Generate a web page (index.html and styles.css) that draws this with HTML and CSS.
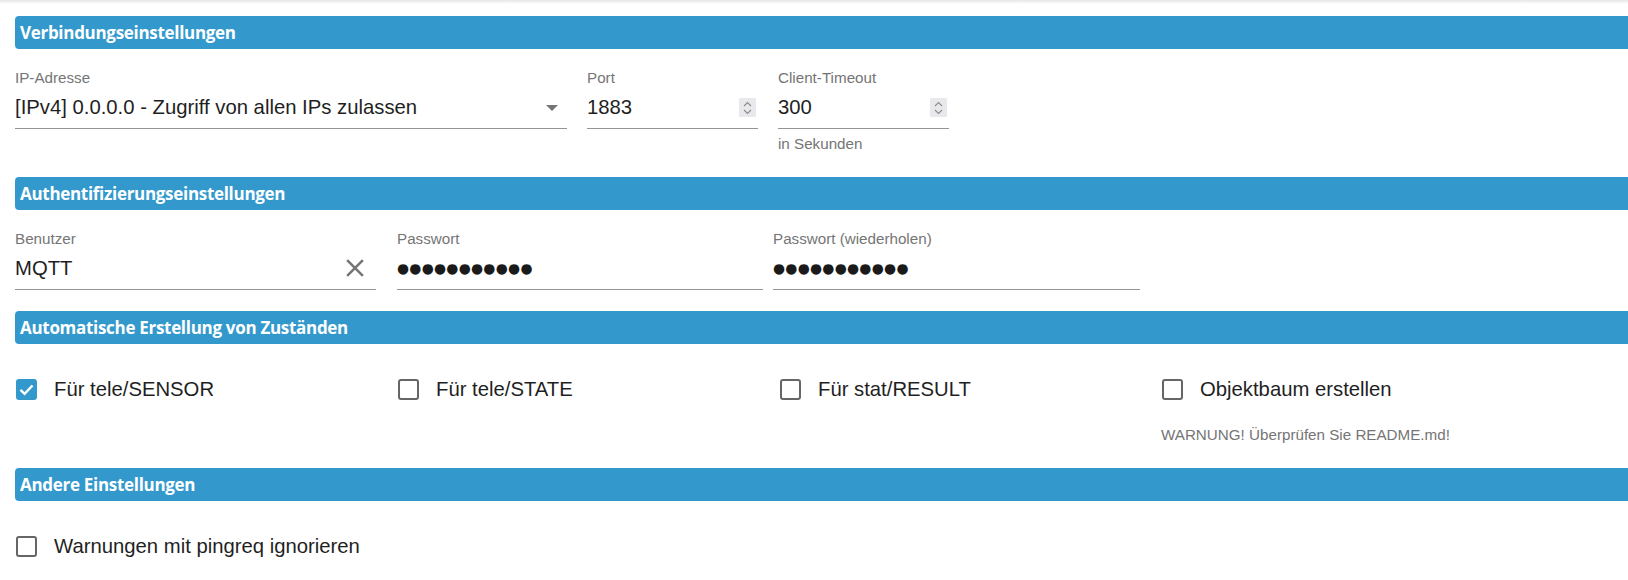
FILE: index.html
```html
<!DOCTYPE html>
<html lang="de">
<head>
<meta charset="utf-8">
<title>MQTT Einstellungen</title>
<link rel="stylesheet" href="styles.css">
</head>
<body>
<div class="topshade"></div>
<div class="page">
  <section class="sec sec1">
    <div class="hdr">Verbindungseinstellungen</div>
    <div class="row">
      <div class="field f-ip">
        <span class="lbl">IP-Adresse</span>
        <div class="ctl">
          <span class="val">[IPv4] 0.0.0.0 - Zugriff von allen IPs zulassen</span>
          <svg class="arrow" width="12" height="6" viewBox="0 0 12 6"><path d="M0 0 L12 0 L6 6 Z" fill="#757575"/></svg>
        </div>
      </div>
      <div class="field f-port">
        <span class="lbl">Port</span>
        <div class="ctl">
          <span class="val">1883</span>
          <span class="spin"><svg width="9" height="14" viewBox="0 0 9 14"><path d="M1 5 L4.5 1.5 L8 5 M1 9 L4.5 12.5 L8 9" fill="none" stroke="#8a8a8a" stroke-width="1.1"/></svg></span>
        </div>
      </div>
      <div class="field f-timeout">
        <span class="lbl">Client-Timeout</span>
        <div class="ctl">
          <span class="val">300</span>
          <span class="spin"><svg width="9" height="14" viewBox="0 0 9 14"><path d="M1 5 L4.5 1.5 L8 5 M1 9 L4.5 12.5 L8 9" fill="none" stroke="#8a8a8a" stroke-width="1.1"/></svg></span>
        </div>
        <div class="help">in Sekunden</div>
      </div>
    </div>
  </section>

  <section class="sec sec2">
    <div class="hdr">Authentifizierungseinstellungen</div>
    <div class="row">
      <div class="field f-user">
        <span class="lbl">Benutzer</span>
        <div class="ctl">
          <span class="val">MQTT</span>
          <svg class="clear" width="30" height="30" viewBox="0 0 24 24"><path d="M19 6.41L17.59 5 12 10.59 6.41 5 5 6.41 10.59 12 5 17.59 6.41 19 12 13.41 17.59 19 19 17.59 13.41 12z" fill="#757575"/></svg>
        </div>
      </div>
      <div class="field f-pw">
        <span class="lbl">Passwort</span>
        <div class="ctl">
          <span class="val dots">●●●●●●●●●●●</span>
        </div>
      </div>
      <div class="field f-pw2">
        <span class="lbl">Passwort (wiederholen)</span>
        <div class="ctl">
          <span class="val dots">●●●●●●●●●●●</span>
        </div>
      </div>
    </div>
  </section>

  <section class="sec sec3">
    <div class="hdr">Automatische Erstellung von Zuständen</div>
    <div class="grid">
      <div class="cell">
        <label class="cb">
          <span class="box checked"><svg width="21" height="21" viewBox="0 0 21 21"><path d="M4.5 10.8 L8.6 14.8 L16.5 6.5" fill="none" stroke="#fff" stroke-width="2.4"/></svg></span>
          <span class="cbtext">Für tele/SENSOR</span>
        </label>
      </div>
      <div class="cell">
        <label class="cb"><span class="box"></span><span class="cbtext">Für tele/STATE</span></label>
      </div>
      <div class="cell">
        <label class="cb"><span class="box"></span><span class="cbtext">Für stat/RESULT</span></label>
      </div>
      <div class="cell">
        <label class="cb"><span class="box"></span><span class="cbtext">Objektbaum erstellen</span></label>
        <div class="warn">WARNUNG! Überprüfen Sie README.md!</div>
      </div>
    </div>
  </section>

  <section class="sec sec4">
    <div class="hdr">Andere Einstellungen</div>
    <div class="grid">
      <div class="cell">
        <label class="cb"><span class="box"></span><span class="cbtext">Warnungen mit pingreq ignorieren</span></label>
      </div>
    </div>
  </section>
</div>
</body>
</html>
```

FILE: styles.css
```css
html, body {
  margin: 0;
  padding: 0;
  background: #ffffff;
}
body {
  font-family: "Liberation Sans", Arial, sans-serif;
  color: #212121;
  overflow: hidden;
}
.topshade {
  height: 4px;
  background: linear-gradient(#e6e6e6, #ffffff);
}
.page {
  padding-left: 15px;
}
.hdr {
  height: 33px;
  background: #3399cc;
  border-radius: 4px 0 0 4px;
  color: #ffffff;
  font-family: "Open Sans", "DejaVu Sans", sans-serif;
  font-weight: 700;
  font-size: 17px;
  letter-spacing: -0.3px;
  line-height: 33px;
  padding-left: 5px;
  white-space: nowrap;
}
.sec1 .hdr { margin-top: 12px; }
.sec2 .hdr { margin-top: 24px; }
.sec3 .hdr { margin-top: 21px; }
.sec4 .hdr { margin-top: 24px; }

.row {
  display: flex;
  align-items: flex-start;
  padding-top: 20px;
}
.field {
  display: flex;
  flex-direction: column;
}
.f-ip { width: 552px; margin-right: 20px; }
.f-port { width: 171px; margin-right: 20px; }
.f-timeout { width: 171px; }
.f-user { width: 361px; margin-right: 21px; }
.f-pw { width: 366px; margin-right: 10px; }
.f-pw2 { width: 367px; }

.lbl {
  display: block;
  font-size: 15.2px;
  line-height: 18px;
  color: #757575;
  white-space: nowrap;
}
.ctl {
  display: flex;
  align-items: center;
  height: 24px;
  margin-top: 8px;
  padding-bottom: 9px;
  border-bottom: 1px solid #949494;
}
.val {
  flex: 1;
  font-size: 20.3px;
  line-height: 24px;
  color: #1f1f1f;
  white-space: nowrap;
  overflow: hidden;
}
.dots {
  font-family: "DejaVu Sans", sans-serif;
  font-size: 13.8px;
  letter-spacing: 0.3px;
  color: #1a1a1a;
}
.arrow {
  margin-right: 9px;
  margin-top: 2px;
}
.spin {
  display: flex;
  align-items: center;
  justify-content: center;
  width: 17px;
  height: 19px;
  margin-right: 2px;
  margin-top: 1px;
  background: #e9e9ed;
  border-radius: 1px;
}
.clear {
  margin-right: 6px;
}
.help {
  margin-top: 6px;
  font-size: 15.2px;
  line-height: 18px;
  color: #757575;
}

.grid {
  display: grid;
  grid-template-columns: repeat(4, 382px);
  padding-top: 33px;
}
.cell {
  display: flex;
  flex-direction: column;
}
.cb {
  display: flex;
  align-items: center;
  height: 24px;
}
.box {
  box-sizing: border-box;
  width: 21px;
  height: 21px;
  margin-left: 1px;
  border: 2.5px solid #666666;
  border-radius: 3px;
  flex: none;
}
.box.checked {
  border: none;
  background: #3399cc;
  display: flex;
}
.cbtext {
  margin-left: 17px;
  font-size: 20.3px;
  line-height: 24px;
  color: #1f1f1f;
  white-space: nowrap;
}
.warn {
  margin-top: 25px;
  font-size: 15.2px;
  line-height: 18px;
  color: #757575;
  white-space: nowrap;
}
```
